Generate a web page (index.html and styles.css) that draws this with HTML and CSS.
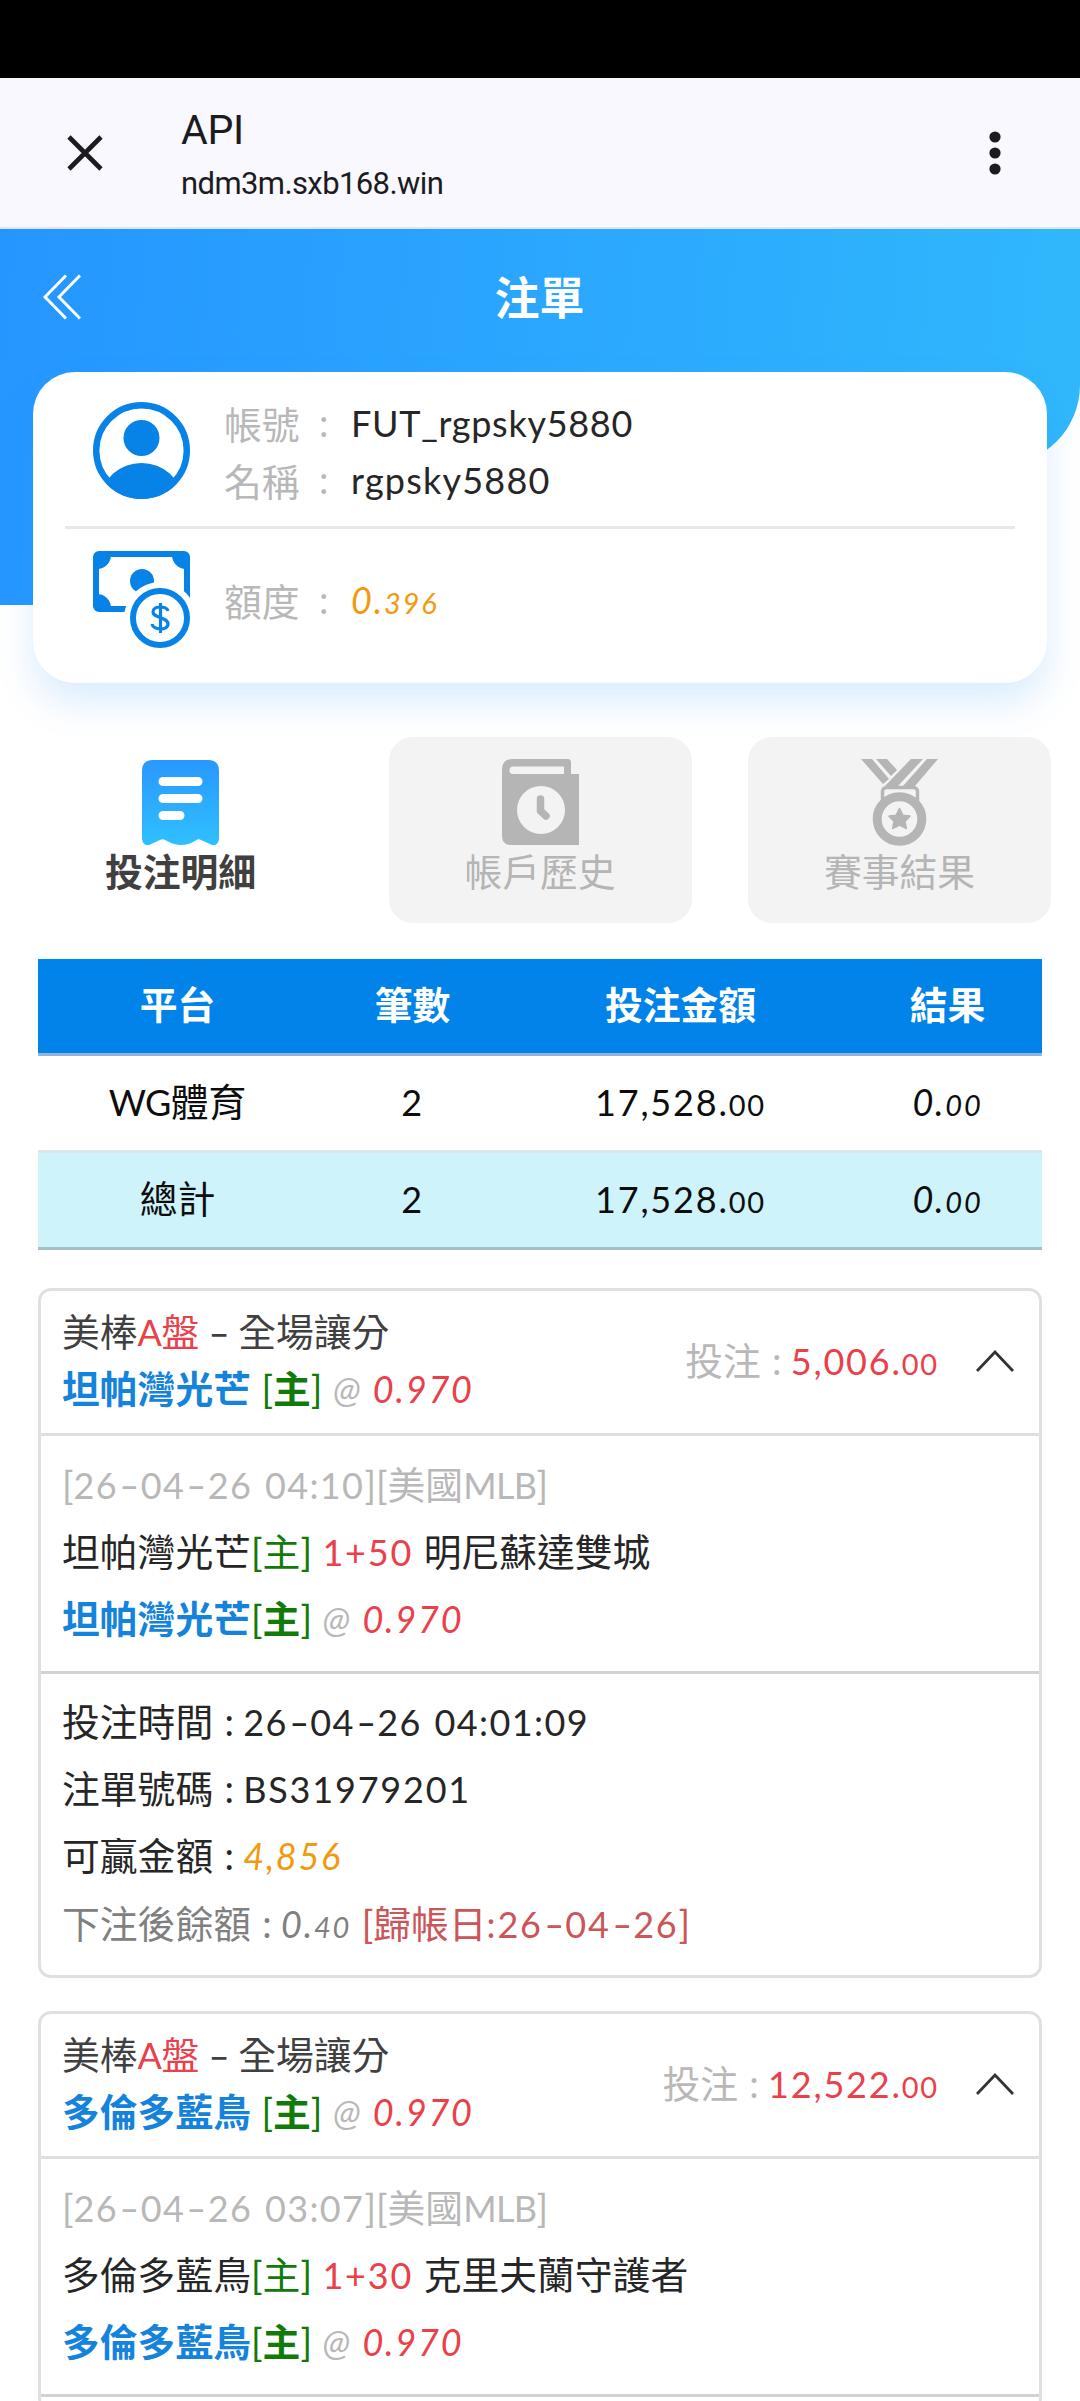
FILE: index.html
```html
<!DOCTYPE html>
<html lang="zh-Hant">
<head>
<meta charset="utf-8">
<meta name="viewport" content="width=device-width">
<title>API</title>
<link rel="stylesheet" href="styles.css">
</head>
<body>
<div class="status"></div>
<header class="browser">
  <svg class="close" viewBox="0 0 36 36"><path d="M2 2 34 34M34 2 2 34"/></svg>
  <div class="site"><div class="site-title">API</div><div class="site-url">ndm3m.sxb168.win</div></div>
  <svg class="more" viewBox="0 0 12 44"><circle cx="6" cy="6" r="5.6"/><circle cx="6" cy="22" r="5.6"/><circle cx="6" cy="38" r="5.6"/></svg>
</header>

<section class="hero">
  <div class="hero-bg"></div>
  <div class="titlebar">
    <svg class="back" viewBox="0 0 38 46"><path d="M23 1.500 2 23 23 44.500M37 1.500 16 23 37 44.500"/></svg>
    <h1>注單</h1>
  </div>
  <div class="profile">
    <div class="prow user">
      <svg class="picon" viewBox="0 0 97 97"><defs><clipPath id="disc"><circle cx="48.500" cy="48.500" r="48.500"/></clipPath></defs><circle cx="48.500" cy="48.500" r="45.300" fill="none" stroke="#0783e8" stroke-width="6.400"/><circle cx="48.500" cy="36" r="18" fill="#0783e8"/><ellipse cx="48.500" cy="97" rx="40" ry="36" fill="#0783e8" clip-path="url(#disc)"/></svg>
      <div class="pinfo">
        <div class="pline"><span class="plabel">帳號</span><span class="colon">:</span><span class="n up a1">FUT_rgpsky5880</span></div>
        <div class="pline"><span class="plabel">名稱</span><span class="colon">:</span><span class="n up a2">rgpsky5880</span></div>
      </div>
    </div>
    <div class="prow credit">
      <svg class="picon" viewBox="0 0 97 97"><rect x="3" y="3" width="91" height="55" rx="3" fill="none" stroke="#0783e8" stroke-width="6"/><path fill="#0783e8" d="M4 4H18A14 14 0 0 1 4 18ZM93 4H79A14 14 0 0 0 93 18ZM4 57H18A14 14 0 0 0 4 43Z"/><circle cx="49" cy="30" r="12" fill="#0783e8"/><circle cx="67" cy="67" r="36" fill="#fff"/><circle cx="67" cy="67" r="27" fill="#fff" stroke="#0783e8" stroke-width="6"/><path d="M75 60C74 55 60 54 60 61 60 67 75 66 75 73 75 80 60 79 59 73M67.500 52V82" fill="none" stroke="#0783e8" stroke-width="3.200"/></svg>
      <div class="pline"><span class="plabel">額度</span><span class="colon">:</span><span class="n orange">0.<small>396</small></span></div>
    </div>
  </div>
</section>

<nav class="tabs">
  <a class="tab active">
    <svg viewBox="0 0 77 87"><defs><linearGradient id="g" x1="0" y1="0" x2="0" y2="1"><stop offset="0" stop-color="#2997ff"/><stop offset="1" stop-color="#2fc0ff"/></linearGradient></defs><path fill="url(#g)" d="M0 12Q0 1 11 1H66Q77 1 77 12V80Q76 87 70 86L59 81Q56 79 53 82 46 86 39 86 32 86 25 82 21 79 18 81L7 86Q1 87 0 80Z"/><path d="M21 22.500H56M21 39.500H56M21 56.500H38" stroke="#fff" stroke-width="9" stroke-linecap="round"/></svg>
    <span>投注明細</span>
  </a>
  <a class="tab">
    <svg viewBox="0 0 77 87"><path fill="#b5b5b5" d="M11 0H66Q69 0 69 4V15H77V86H9Q0 86 0 77V11Q0 0 11 0Z"/><path fill="#f3f3f3" d="M11 7.500H62V15H11Q7.500 15 7.500 11.200 7.500 7.500 11 7.500Z"/><circle cx="39" cy="51" r="24" fill="#f3f3f3"/><path d="M38.500 40V52L44 57" fill="none" stroke="#b5b5b5" stroke-width="7.500" stroke-linecap="round" stroke-linejoin="round"/></svg>
    <span>帳戶歷史</span>
  </a>
  <a class="tab">
    <svg viewBox="0 0 77 87"><path fill="#b5b5b5" d="M0 0H11L28 20 22 25ZM15 0H26L36 11 30 17ZM50 0H62L37 27H24ZM66 0H77L54 27H42Z"/><rect x="21.500" y="28.500" width="35" height="20" rx="4" fill="#f3f3f3" stroke="#b5b5b5" stroke-width="3.400"/><circle cx="38.500" cy="60" r="22.300" fill="#f3f3f3" stroke="#b5b5b5" stroke-width="9"/><path fill="#b5b5b5" stroke="#b5b5b5" stroke-width="2" stroke-linejoin="round" d="m38.500 50 3.200 6.400 7 .8-5 5 1.400 7-6.600-3.400-6.600 3.400 1.400-7-5-5 7-.8Z"/></svg>
    <span>賽事結果</span>
  </a>
</nav>

<table class="summary">
  <colgroup><col class="c1"><col class="c2"><col class="c3"><col class="c4"></colgroup>
  <thead><tr><th>平台</th><th>筆數</th><th>投注金額</th><th>結果</th></tr></thead>
  <tbody>
    <tr><td><span class="n up tight">WG</span>體育</td><td><span class="n up">2</span></td><td><span class="n up">17,528.<small>00</small></span></td><td><span class="n">0.<small>00</small></span></td></tr>
    <tr class="total"><td>總計</td><td><span class="n up">2</span></td><td><span class="n up">17,528.<small>00</small></span></td><td><span class="n">0.<small>00</small></span></td></tr>
  </tbody>
</table>

<article class="bet">
  <div class="bet-head">
    <div class="bet-name">
      <div>美棒<span class="red"><span class="n up tight">A</span>盤</span> <i class="dash short">-</i> 全場讓分</div>
      <div><b class="blue">坦帕灣光芒</b> <b class="green"><span class="br">[</span>主<span class="br">]</span></b> <span class="n gray">@</span> <span class="n red">0.970</span></div>
    </div>
    <div class="stake"><span class="gray">投注<span class="colon">:</span></span><span class="n up red">5,006.<small>00</small></span></div>
    <svg class="chev" viewBox="0 0 38 22"><path d="M1 21 19 2 37 21"/></svg>
  </div>
  <div class="bet-body">
    <div class="gray"><span class="br">[</span><span class="n up date">26<i class="dash">-</i>04<i class="dash">-</i>26 04:10</span><span class="br">][</span>美國<span class="n up tight">MLB</span><span class="br">]</span></div>
    <div>坦帕灣光芒<span class="green"><span class="br">[</span>主<span class="br">]</span></span> <span class="n red up">1+50</span> 明尼蘇達雙城</div>
    <div><b class="blue">坦帕灣光芒</b><b class="green"><span class="br">[</span>主<span class="br">]</span></b> <span class="n gray">@</span> <span class="n red">0.970</span></div>
  </div>
  <div class="bet-meta">
    <div>投注時間<span class="colon">:</span><span class="n up date">26<i class="dash">-</i>04<i class="dash">-</i>26 04:01:09</span></div>
    <div>注單號碼<span class="colon">:</span><span class="n up">BS31979201</span></div>
    <div>可贏金額<span class="colon">:</span><span class="n orange">4,856</span></div>
    <div class="dim">下注後餘額<span class="colon">:</span><span class="n">0.<small>40</small></span> <span class="rose"><span class="br">[</span>歸帳日<span class="n up">:26<i class="dash">-</i>04<i class="dash">-</i>26</span><span class="br">]</span></span></div>
  </div>
</article>

<article class="bet">
  <div class="bet-head">
    <div class="bet-name">
      <div>美棒<span class="red"><span class="n up tight">A</span>盤</span> <i class="dash short">-</i> 全場讓分</div>
      <div><b class="blue">多倫多藍鳥</b> <b class="green"><span class="br">[</span>主<span class="br">]</span></b> <span class="n gray">@</span> <span class="n red">0.970</span></div>
    </div>
    <div class="stake"><span class="gray">投注<span class="colon">:</span></span><span class="n up red">12,522.<small>00</small></span></div>
    <svg class="chev" viewBox="0 0 38 22"><path d="M1 21 19 2 37 21"/></svg>
  </div>
  <div class="bet-body">
    <div class="gray"><span class="br">[</span><span class="n up date">26<i class="dash">-</i>04<i class="dash">-</i>26 03:07</span><span class="br">][</span>美國<span class="n up tight">MLB</span><span class="br">]</span></div>
    <div>多倫多藍鳥<span class="green"><span class="br">[</span>主<span class="br">]</span></span> <span class="n red up">1+30</span> 克里夫蘭守護者</div>
    <div><b class="blue">多倫多藍鳥</b><b class="green"><span class="br">[</span>主<span class="br">]</span></b> <span class="n gray">@</span> <span class="n red">0.970</span></div>
  </div>
</article>
</body>
</html>
```
FILE: styles.css
```css
* { box-sizing: border-box; }
body {
  margin: 0;
  width: 1080px;
  height: 2401px;
  overflow: hidden;
  background: #fff;
  color: #262626;
  font: 37.8px/56.7px "Noto Sans CJK TC", sans-serif;
}
svg { display: block; flex: none; }

/* browser chrome */
.status { height: 78px; background: #000; }
.browser {
  display: flex;
  align-items: center;
  height: 151px;
  padding: 0 79px 0 67px;
  background: #f8f8fe;
  border-bottom: 2px solid #dbe6ee;
  color: #1b1b20;
  font-family: Roboto, sans-serif;
}
.close { width: 36px; height: 36px; fill: none; stroke: #1b1b20; stroke-width: 4.6; }
.site { flex: 1; margin-left: 78px; padding-top: 7px; }
.site-title { font-size: 41px; line-height: 56px; letter-spacing: -.3px; }
.site-url { font-size: 31px; line-height: 52px; letter-spacing: -.6px; }
.more { width: 12px; height: 44px; fill: #1b1b20; }

/* hero */
.hero { position: relative; height: 508px; }
.hero-bg {
  position: absolute;
  inset: 0 0 132px;
  background: linear-gradient(95deg, #2596ff, #2ba7ff 50%, #30b8fb);
  clip-path: path("M0 0H1080V156A80 80 0 0 1 1000 236H200V376H0Z");
}
.titlebar { position: relative; display: flex; align-items: center; height: 143px; padding: 0 43px; }
.back { width: 38px; height: 46px; fill: none; stroke: #fff; stroke-width: 3; margin-top: -8px; }
h1 { flex: 1; margin: -9px 39px 0 0; text-align: center; color: #fff; font-size: 45px; line-height: 60px; font-weight: 700; }
.profile {
  position: relative;
  height: 311px;
  margin: 0 33px;
  padding: 0 32px;
  background: #fff;
  border-radius: 42px;
  box-shadow: 0 20px 36px rgba(40, 150, 245, .17);
}
.prow { display: flex; align-items: center; padding: 0 28px; }
.user { height: 157px; padding-top: 2px; border-bottom: 3px solid #e8e8e8; }
.pinfo { padding-top: 3px; }
.credit { height: 140px; }
.picon { width: 97px; height: 97px; margin-right: 34px; }
.pline { display: flex; align-items: center; }
.plabel { width: 95px; color: #b8b8b8; }
.pline .colon { width: 32px; margin: 0; color: #b8b8b8; text-align: left; }
.credit .pline { padding-top: 2px; }

/* tabs */
.tabs { display: grid; grid-template-columns: repeat(3, 303px); gap: 56.5px; padding-left: 29px; }
.tab {
  display: flex;
  flex-direction: column;
  align-items: center;
  height: 186px;
  padding-top: 22px;
  border-radius: 24px;
  background: #f3f3f3;
  color: #b5b5b5;
}
.tab svg { width: 77px; height: 87px; }
.tab span { line-height: 48px; }
.active { background: none; color: #404040; font-weight: 700; }

/* summary */
.summary { width: 1004px; margin: 36px 0 0 38px; table-layout: fixed; border-collapse: collapse; color: #0d0d0d; text-align: center; }
.c1 { width: 279px; }
.c2 { width: 191px; }
.c3 { width: 345px; }
.c4 { width: 189px; }
.summary th { height: 95.500px; padding: 0 0 5px; background: #0183ea; color: #fff; border-bottom: 3px solid #92b4d8; font-weight: 700; }
.summary td { height: 97px; padding: 0 0 5px; border-bottom: 3px solid #dce6ea; }
.summary .total td { background: #cff3fb; border-bottom-color: #a6bfc4; }

/* bet cards */
.bet { width: 1004px; margin: 37.500px 0 0 38px; border: 3px solid #e0e0e0; border-radius: 13px; }
.bet + .bet { margin-top: 33px; }
.bet:last-child { height: 400px; }
.bet-head { display: flex; align-items: center; height: 145px; padding: 0 25px 6px 21px; border-bottom: 3px solid #dfdfdf; color: #404040; }
.bet-name { flex: 1; }
.stake { margin-top: 1px; }
.chev { width: 38px; height: 22px; margin: 0 0 -4px 37px; fill: none; stroke: #333; stroke-width: 2.8; }
.bet-body { height: 238px; padding: 13px 21px 0; border-bottom: 3px solid #d2d2d2; }
.bet-meta { height: 301px; padding: 12px 21px 0; }
.bet-body div, .bet-meta div { line-height: 67.4px; }
.bet div { white-space: nowrap; word-spacing: 2px; }

/* inline text */
.n { font-family: Lato, "Noto Sans CJK TC", sans-serif; font-size: 36px; line-height: 1; font-style: italic; font-weight: 400; letter-spacing: 1.8px; }
.up { font-style: normal; }
.date { letter-spacing: 1.4px; }
.tight { letter-spacing: -.6px; }
.a1 { letter-spacing: .7px; }
.a2 { letter-spacing: 1.2px; }
.n small { font-size: 29px; }
.br { font-family: Lato, sans-serif; font-weight: 400; line-height: 1; }
.colon { display: inline-block; width: 14px; margin: 0 7px 0 9px; font-family: Lato, sans-serif; line-height: 1; text-align: center; }
.dash { display: inline-block; width: 22.5px; letter-spacing: 0; font-style: normal; line-height: 1; text-align: center; transform: scaleX(1.5); }
.dash.short { width: 18px; }
.gray { color: #b8b8b8; }
.red { color: #ea404a; }
.blue { color: #1583dc; }
.green { color: #117a08; }
.orange { color: #f19a10; }
.dim { color: #808080; }
.rose { color: #cb5558; }
```
